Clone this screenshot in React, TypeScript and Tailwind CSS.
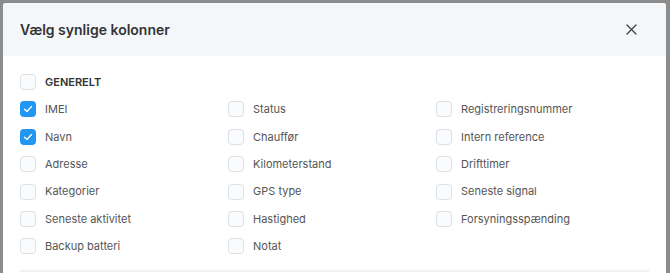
import React from "react";

const cols: { label: string; checked?: boolean }[][] = [
  [
    { label: "IMEI", checked: true },
    { label: "Navn", checked: true },
    { label: "Adresse" },
    { label: "Kategorier" },
    { label: "Seneste aktivitet" },
    { label: "Backup batteri" },
  ],
  [
    { label: "Status" },
    { label: "Chauffør" },
    { label: "Kilometerstand" },
    { label: "GPS type" },
    { label: "Hastighed" },
    { label: "Notat" },
  ],
  [
    { label: "Registreringsnummer" },
    { label: "Intern reference" },
    { label: "Drifttimer" },
    { label: "Seneste signal" },
    { label: "Forsyningsspænding" },
  ],
];

function Box({ checked }: { checked?: boolean }) {
  if (checked) {
    return (
      <div className="w-4 h-4 rounded-[4px] bg-[#2196f3] flex items-center justify-center shrink-0">
        <svg width="10" height="10" viewBox="0 0 10 10" fill="none">
          <path d="M1.5 5.2 L4 7.5 L8.5 2.5" stroke="white" strokeWidth="1.3" strokeLinecap="round" strokeLinejoin="round" />
        </svg>
      </div>
    );
  }
  return <div className="w-4 h-4 rounded-[4px] border border-[#dcdfe3] bg-[#fafbfc] shrink-0" />;
}

export default function App() {
  return (
    <div
      className="w-[670px] h-[273px] overflow-hidden bg-[#8c8c8c] pl-[3px] pt-[3px] pr-[4px]"
      style={{ fontFamily: "Inter, 'Noto Sans', sans-serif" }}
    >
      <div className="bg-white h-[300px] rounded-tl-[3px] rounded-tr-[3px] overflow-hidden">
        <div className="h-[53px] bg-[#f4f7fa] flex items-center justify-between pl-[17px] pr-[29px]">
          <span className="text-[14px] font-semibold text-[#333]">Vælg synlige kolonner</span>
          <svg width="11" height="11" viewBox="0 0 11 11" fill="none">
            <path d="M1 1 L10 10 M10 1 L1 10" stroke="#444" strokeWidth="1.4" strokeLinecap="round" />
          </svg>
        </div>
        <div className="px-[17px] pt-[18px]">
          <div className="flex items-center gap-[9px] h-4">
            <Box />
            <span className="text-[11px] font-semibold text-[#333]">GENERELT</span>
          </div>
          <div className="grid grid-cols-[208px_208px_1fr] mt-[11.4px]">
            {cols.map((c, i) => (
              <div key={i} className="flex flex-col gap-[11.4px]">
                {c.map((it) => (
                  <div key={it.label} className="flex items-center gap-[9px] h-4">
                    <Box checked={it.checked} />
                    <span className="text-[11px] text-[#555]">{it.label}</span>
                  </div>
                ))}
              </div>
            ))}
          </div>
          <div className="mt-[16px] h-[2px] bg-[#f0f1f3]" />
        </div>
      </div>
    </div>
  );
}
